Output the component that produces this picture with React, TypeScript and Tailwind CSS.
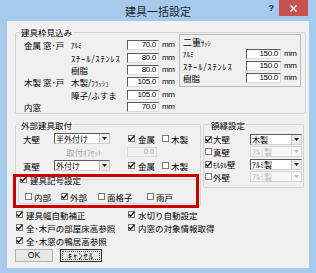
import React from "react";

const Cb = ({ on, dis }: { on?: boolean; dis?: boolean }) => (
  <span
    className={`w-[7px] h-[7px] shrink-0 border bg-white flex items-center justify-center ${
      dis ? "border-[#c4c4c4]" : "border-[#7a7a7a]"
    }`}
  >
    {on && (
      <svg width="7" height="7" viewBox="0 0 7 7" className="overflow-visible">
        <path d="M0.6 3.2 L2.6 5.3 L6.4 0.8" stroke="#1c1c1c" strokeWidth="1.4" fill="none" />
      </svg>
    )}
  </span>
);

const Num = ({ v, w, dis }: { v: string; w: string; dis?: boolean }) => (
  <span
    className={`${w} h-[10px] flex items-center justify-end pr-[2px] font-['Liberation_Sans',sans-serif] text-[8px] tracking-[-0.3px] border ${
      dis
        ? "border-[#dadada] text-[#a8a8a8] bg-[#f0f0f0]"
        : "border-t-[#5a5a5a] border-l-[#5a5a5a] border-r-[#dcdcdc] border-b-[#dcdcdc] bg-white"
    }`}
  >
    {v}
  </span>
);

const Sel = ({ v, w, dis }: { v: string; w: string; dis?: boolean }) => (
  <span
    className={`${w} h-[11px] flex items-stretch border ${
      dis
        ? "border-[#d4d4d4] bg-[#f7f7f7] text-[#b4b4b4]"
        : "border-t-[#5a5a5a] border-l-[#5a5a5a] border-r-[#cfcfcf] border-b-[#cfcfcf] bg-white"
    }`}
  >
    <span className="flex-1 pl-[1px] text-[8px] leading-[9px] whitespace-nowrap overflow-hidden">{v}</span>
    <span
      className={`w-[10px] flex items-center justify-center border-l ${
        dis ? "border-[#e2e2e2]" : "border-[#c4c4c4] bg-[#ededed]"
      }`}
    >
      <svg width="5" height="3" viewBox="0 0 5 3">
        <path d="M0 0H5L2.5 3Z" fill={dis ? "#c0c0c0" : "#111"} />
      </svg>
    </span>
  </span>
);

const Opt = ({ on, label, w, gap }: { on?: boolean; label: string; w?: string; gap?: string }) => (
  <span className={`${w ?? ""} h-[10px] flex items-center ${gap ?? "gap-[2px]"} whitespace-nowrap`}>
    <Cb on={on} />
    <span>{label}</span>
  </span>
);

const Mm = () => (
  <span className="pl-[3px] font-['Liberation_Sans',sans-serif] text-[8px] tracking-[-0.3px]">mm</span>
);

export default function App() {
  return (
    <div className="w-[316px] h-[273px] bg-[#a6caed] flex flex-col overflow-hidden font-['Noto_Sans_CJK_JP','Liberation_Sans',sans-serif] text-[#000]">
      <div className="h-[21px] shrink-0 grid grid-cols-[1fr_auto_1fr] items-start">
        <div />
        <div className="pt-[4px] text-[11px] leading-[14px] text-[#1e1e1e]">建具一括設定</div>
        <div className="flex justify-end items-start pr-[8px]">
          <span className="mt-[3px] mr-[5px] text-[9px] leading-[10px] font-bold font-['Liberation_Sans',sans-serif] text-[#222]">
            ?
          </span>
          <span className="w-[29px] h-[16px] bg-[#c75050] flex items-center justify-center">
            <svg width="7" height="7" viewBox="0 0 7 7">
              <path d="M0.5 0.5L6.5 6.5M6.5 0.5L0.5 6.5" stroke="#fff" strokeWidth="1.5" />
            </svg>
          </span>
        </div>
      </div>

      <div className="relative mx-[7px] mb-[5px] flex-1 bg-[#f0f0f0] pt-[6px] pl-[8px] text-[8.5px] leading-[10px]">
        {/* 建具枠見込み */}
        <fieldset className="w-[291px] border border-[#d3d3d3] rounded-[2px]">
          <legend className="ml-[4px] px-[1px] h-[10px] leading-[10px]">建具枠見込み</legend>
          <div className="-mt-[3px] pl-[8px] flex items-start">
            <div className="w-[155px] mt-[5px] grid grid-cols-[47px_56px_32px_auto] auto-rows-[12.4px] items-center whitespace-nowrap">
              <span>金属 窓･戸</span>
              <span className="text-[7px]">ｱﾙﾐ</span>
              <Num v="70.0" w="w-[32px]" />
              <Mm />

              <span />
              <span className="tracking-[0.8px]">ｽﾁｰﾙ/ｽﾃﾝﾚｽ</span>
              <Num v="80.0" w="w-[32px]" />
              <Mm />

              <span />
              <span>樹脂</span>
              <Num v="80.0" w="w-[32px]" />
              <Mm />

              <span>木製 窓･戸</span>
              <span>
                木製/<span className="text-[7px]">ﾌﾗｯｼｭ</span>
              </span>
              <Num v="105.0" w="w-[32px]" />
              <Mm />

              <span />
              <span>障子/ふすま</span>
              <Num v="105.0" w="w-[32px]" />
              <Mm />

              <span>内窓</span>
              <span />
              <Num v="70.0" w="w-[32px]" />
              <Mm />
            </div>

            <div className="w-[122px] h-[53px] border border-[#b9b9b9] pl-[3px] pt-[3px]">
              <div className="h-[10px] flex items-end leading-[10px]">
                <span className="text-[9px]">二重</span>
                <span className="text-[6.5px] leading-[9px]">ｻｯｼ</span>
              </div>
              <div className="grid grid-cols-[63px_35px_auto] auto-rows-[12px] items-center whitespace-nowrap">
                <span className="text-[7px]">ｱﾙﾐ</span>
                <Num v="150.0" w="w-[35px]" />
                <Mm />
                <span className="tracking-[0.8px]">ｽﾁｰﾙ/ｽﾃﾝﾚｽ</span>
                <Num v="150.0" w="w-[35px]" />
                <Mm />
                <span>樹脂</span>
                <Num v="150.0" w="w-[35px]" />
                <Mm />
              </div>
            </div>
          </div>
        </fieldset>

        <div className="mt-[5.6px] flex items-start gap-[2px]">
          {/* 外部建具取付 */}
          <fieldset className="w-[186px] border border-[#d3d3d3] rounded-[2px] pb-[1px]">
            <legend className="ml-[4px] px-[1px] h-[10px] leading-[10px]">外部建具取付</legend>
            <div className="pt-[2px] pl-[7px] whitespace-nowrap">
              <div className="h-[13.5px] flex items-center">
                <span className="w-[31px]">大壁</span>
                <Sel v="半外付け" w="w-[56px]" />
                <span className="ml-[18px] w-[34px]">
                  <Opt on label="金属" gap="gap-[3px]" />
                </span>
                <Opt label="木製" />
              </div>
              <div className="h-[13.5px] flex items-center">
                <span className="w-[104px] pl-[43px] text-[#a6a6a6]">
                  取付<span className="text-[7.5px]">ｵﾌｾｯﾄ</span>
                </span>
                <Num v="0.0" w="w-[30px]" dis />
              </div>
              <div className="h-[13.5px] flex items-center">
                <span className="w-[31px]">真壁</span>
                <Sel v="外付け" w="w-[56px]" />
                <span className="ml-[18px] w-[34px]">
                  <Opt on label="金属" gap="gap-[3px]" />
                </span>
                <Opt label="木製" />
              </div>
            </div>

            {/* 建具記号設定 */}
            <fieldset className="mt-[2.5px] ml-[2px] w-[179px] border border-[#d3d3d3] rounded-[2px] pb-[1px]">
              <legend className="ml-[1px] pr-[1px] h-[10px]">
                <span className="h-[10px] flex items-center gap-[3px]">
                  <Cb on />
                  <span>建具記号設定</span>
                </span>
              </legend>
              <div className="pt-[7px] pl-[6px] flex">
                <Opt label="内部" w="w-[36px]" />
                <Opt on label="外部" w="w-[37px]" />
                <Opt label="面格子" w="w-[49px]" />
                <Opt label="雨戸" />
              </div>
            </fieldset>
          </fieldset>

          {/* 額縁設定 */}
          <fieldset className="w-[101px] border border-[#d3d3d3] rounded-[2px] pb-[4px]">
            <legend className="ml-[6px] px-[1px] h-[10px] leading-[10px]">額縁設定</legend>
            <div className="pt-[3px] pl-[1px] whitespace-nowrap">
              <div className="h-[12.5px] flex items-center">
                <span className="w-[8px]"><Cb on /></span>
                <span className="w-[37px]">大壁</span>
                <Sel v="木製" w="w-[52px]" />
              </div>
              <div className="h-[12.5px] flex items-center">
                <span className="w-[8px]"><Cb /></span>
                <span className="w-[37px]">真壁</span>
                <Sel v="ｱﾙﾐ製" w="w-[52px]" dis />
              </div>
              <div className="h-[12.5px] flex items-center">
                <span className="w-[8px]"><Cb on /></span>
                <span className="w-[37px]">
                  <span className="text-[7px]">ﾓﾙﾀﾙ</span>壁
                </span>
                <Sel v="ｱﾙﾐ製" w="w-[52px]" />
              </div>
              <div className="h-[12.5px] flex items-center">
                <span className="w-[8px]"><Cb /></span>
                <span className="w-[37px]">外壁</span>
                <Sel v="ｱﾙﾐ製" w="w-[52px]" dis />
              </div>
            </div>
          </fieldset>
        </div>

        <div className="mt-[2.5px] pl-[1px] grid grid-cols-[112px_auto] auto-rows-[13px] items-center">
          <Opt on label="建具幅自動補正" gap="gap-[3px]" />
          <Opt on label="水切り自動設定" gap="gap-[3px]" />
          <Opt on label="全･木戸の部屋床高参照" gap="gap-[3px]" />
          <Opt on label="内窓の対象情報取得" gap="gap-[3px]" />
          <Opt on label="全･木窓の鴨居高参照" gap="gap-[3px]" />
        </div>

        <div className="mt-[1.5px] flex gap-[7px]">
          <button className="w-[38px] h-[13px] border border-[#b4b4b4] bg-[#e8e8e8] text-[8.5px] leading-none font-['Liberation_Sans',sans-serif]">
            OK
          </button>
          <button className="w-[42px] h-[13px] border border-[#2e2e2e] bg-[#e8e8e8] p-[1px]">
            <span className="h-full border border-dotted border-[#555] flex items-center justify-center text-[8.5px] leading-none tracking-[1px]">
              ｷｬﾝｾﾙ
            </span>
          </button>
        </div>

        {/* highlight */}
        <div className="absolute left-[6px] top-[153px] w-[186px] h-[34px] border-[3px] border-[#cc0000]" />
      </div>
    </div>
  );
}
